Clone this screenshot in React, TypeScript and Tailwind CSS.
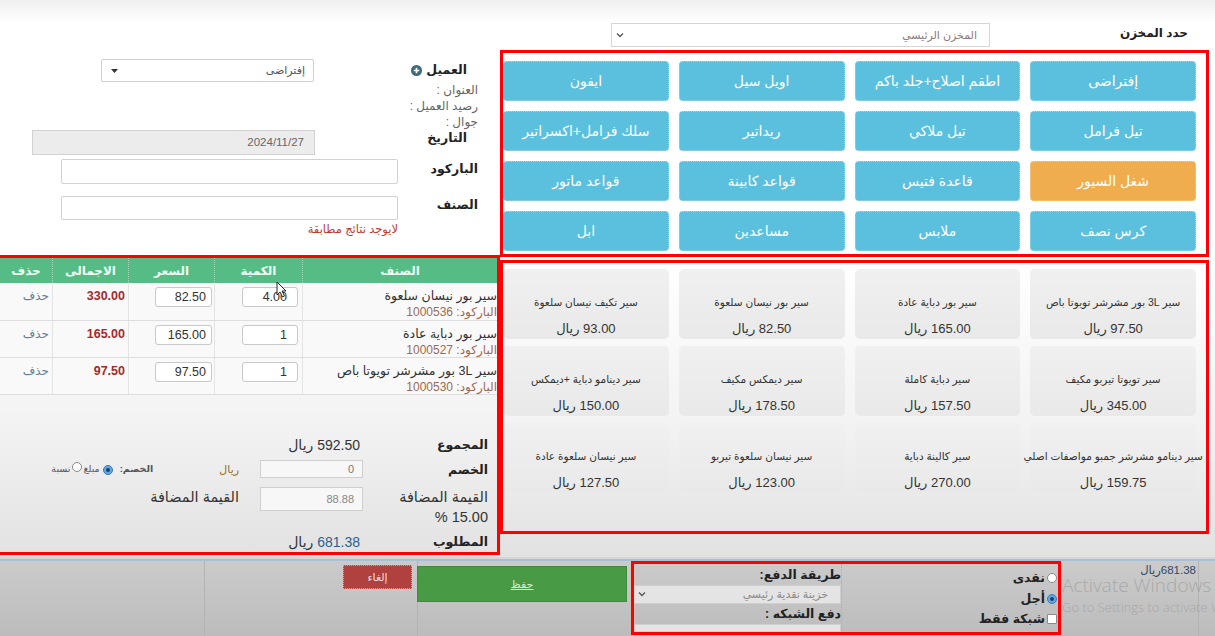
import React from "react";

const cats: { t: string; o?: boolean }[] = [
  { t: "إفتراضى" },
  { t: "اطقم اصلاح+جلد باكم" },
  { t: "اويل سيل" },
  { t: "ايفون" },
  { t: "تيل فرامل" },
  { t: "تيل ملاكي" },
  { t: "ريداتير" },
  { t: "سلك فرامل+اكسراتير" },
  { t: "شغل السيور", o: true },
  { t: "قاعدة فتيس" },
  { t: "قواعد كابينة" },
  { t: "قواعد ماتور" },
  { t: "كرس نصف" },
  { t: "ملابس" },
  { t: "مساعدين" },
  { t: "ابل" },
];

const products: [string, string][] = [
  ["سير 3L بور مشرشر تويوتا باص", "97.50"],
  ["سير بور دباية عادة", "165.00"],
  ["سير بور نيسان سلعوة", "82.50"],
  ["سير تكيف نيسان سلعوة", "93.00"],
  ["سير تويوتا تيربو مكيف", "345.00"],
  ["سير دباية كاملة", "157.50"],
  ["سير ديمكس مكيف", "178.50"],
  ["سير دينامو دباية +ديمكس", "150.00"],
  ["سير دينامو مشرشر جمبو مواصفات اصلي", "159.75"],
  ["سير كالينة دباية", "270.00"],
  ["سير نيسان سلعوة تيربو", "123.00"],
  ["سير نيسان سلعوة عادة", "127.50"],
];

const cart: [string, string, string, string, string][] = [
  ["سير بور نيسان سلعوة", "1000536", "4.00", "82.50", "330.00"],
  ["سير بور دباية عادة", "1000527", "1", "165.00", "165.00"],
  ["سير 3L بور مشرشر تويوتا باص", "1000530", "1", "97.50", "97.50"],
];

function Chevron() {
  return (
    <svg width="8" height="6" viewBox="0 0 8 6">
      <path d="M1 1.5l3 3 3-3" fill="none" stroke="#555" strokeWidth="1.3" />
    </svg>
  );
}

function Radio({ checked }: { checked?: boolean }) {
  return checked ? (
    <span className="inline-flex w-[10px] h-[10px] rounded-full bg-[#5ea9e6] border border-[#3b78b6] items-center justify-center shrink-0">
      <span className="w-[4px] h-[4px] rounded-full bg-[#1f3f63]" />
    </span>
  ) : (
    <span className="inline-block w-[10px] h-[10px] rounded-full bg-white border border-[#8a8a8a] shrink-0" />
  );
}

function RightColumn() {
  return (
    <div className="w-[715px] shrink-0 flex flex-col">
      {/* warehouse row */}
      <div className="h-[50px] flex items-start pt-[23px] pr-[27px]">
        <div className="w-[198px] h-[20px] leading-[20px] text-[12px] font-bold text-[#222]">حدد المخزن</div>
        <div className="w-[379px] h-[24px] border border-[#d6d6d6] bg-white flex items-center justify-between pr-[12px] pl-[4px]">
          <span className="text-[11px] text-[#8a7a7a]">المخزن الرئيسي</span>
          <Chevron />
        </div>
      </div>
      {/* categories */}
      <div className="mr-[6px] w-[709px] h-[207px] border-[3px] border-[#ff0000] pt-[8px] pr-[10px]">
        <div className="grid grid-cols-4 gap-[10px]">
          {cats.map((c, i) => (
            <div
              key={i}
              className={`h-[40px] rounded-[4px] flex items-center justify-center text-white text-[14px] border border-dotted border-white/40 ${
                c.o ? "bg-[#f0ad4e]" : "bg-[#5bc0de]"
              }`}
            >
              {c.t}
            </div>
          ))}
        </div>
      </div>
      {/* products */}
      <div className="mr-[6px] mt-[3px] w-[709px] h-[274px] border-[3px] border-[#ff0000] pt-[6px] pr-[10px]">
        <div className="grid grid-cols-4 gap-x-[10px] gap-y-[7px]">
          {products.map(([n, p], i) => (
            <div
              key={i}
              className="h-[70px] rounded-[5px] bg-[linear-gradient(to_bottom,#f0f0f0,#e9e9e9)] flex flex-col items-center pt-[26px]"
            >
              <div className="text-[10.5px] leading-[14px] text-[#333] whitespace-nowrap">{n}</div>
              <div className="mt-[12px] text-[13px] leading-[16px] text-[#333] whitespace-nowrap">
                {p} ريال
              </div>
            </div>
          ))}
        </div>
      </div>
    </div>
  );
}

function LeftColumn() {
  return (
    <div className="w-[500px] shrink-0 flex flex-col pt-[59px]">
      {/* customer */}
      <div className="flex items-center h-[23px] pr-[33px]">
        <div className="w-[153px] flex items-center gap-[4px] text-[12.5px] font-bold text-[#222]">
          <span>العميل</span>
          <svg width="11" height="11" viewBox="0 0 12 12">
            <circle cx="6" cy="6" r="6" fill="#3a6a7c" />
            <path d="M6 3v6M3 6h6" stroke="#fff" strokeWidth="1.8" />
          </svg>
        </div>
        <div className="w-[213px] h-[23px] border border-[#cfcfcf] bg-white rounded-[2px] flex items-center justify-between pr-[8px] pl-[9px]">
          <span className="text-[11px] text-[#555]">إفتراضى</span>
          <svg width="7" height="4" viewBox="0 0 7 4">
            <path d="M0 0h7L3.5 4z" fill="#333" />
          </svg>
        </div>
      </div>
      <div className="pr-[22px] text-[12px] leading-[16px] text-[#666]">
        <div>العنوان :</div>
        <div>رصيد العميل :</div>
        <div>جوال :</div>
      </div>
      {/* date */}
      <div className="flex items-start pr-[33px] h-[25px]">
        <div className="w-[152px] leading-[16px] text-[12.5px] font-bold text-[#222]">التاريخ</div>
        <div className="w-[283px] h-[25px] bg-[#ececec] border border-[#d2d2d2] flex items-center pr-[10px] text-[11.5px] text-[#666]">
          2024/11/27
        </div>
      </div>
      {/* barcode */}
      <div className="mt-[4px] flex items-start pr-[22px]">
        <div className="w-[80px] pt-[2px] leading-[16px] text-[12.5px] font-bold text-[#222]">الباركود</div>
        <div className="w-[337px] h-[25px] bg-white border border-[#d2d2d2] rounded-[2px]" />
      </div>
      <div className="mt-[12px] flex items-start pr-[22px]">
        <div className="w-[80px] pt-[1px] leading-[16px] text-[12.5px] font-bold text-[#222]">الصنف</div>
        <div className="w-[337px] h-[24px] bg-white border border-[#d2d2d2] rounded-[2px]" />
      </div>
      <div className="mt-[2px] pr-[102px] text-[11.5px] leading-[14px] text-[#c0392b]">لايوجد نتائج مطابقة</div>

      {/* cart box */}
      <div className="mt-[19px] w-[500px] h-[300px] border-t-[3px] border-r-[3px] border-b-[3px] border-[#ff0000] flex flex-col">
        <div className="flex h-[25px] bg-[#55bc86] text-[#f0fff5] text-[12px] font-bold">
          <div className="w-[195px] flex items-center justify-center border-l border-dotted border-[#9bd9b7]">الصنف</div>
          <div className="w-[88px] flex items-center justify-center border-l border-dotted border-[#9bd9b7]">الكمية</div>
          <div className="w-[86px] flex items-center justify-center border-l border-dotted border-[#9bd9b7]">السعر</div>
          <div className="w-[76px] flex items-center justify-center border-l border-dotted border-[#9bd9b7]">الاجمالى</div>
          <div className="w-[52px] flex items-center justify-center">حذف</div>
        </div>
        {cart.map(([n, b, q, p, t], i) => (
          <div key={i} className={`flex ${i === 0 ? "h-[38px]" : "h-[37px]"} bg-[#f9f9f9] border-b border-[#dedede]`}>
            <div className="w-[195px] border-l border-[#e4e4e4] pt-[5px]">
              <div className="text-[12.5px] leading-[16px] text-[#333] whitespace-nowrap">{n}</div>
              <div className="text-[12px] leading-[16px] text-[#9c6a55] whitespace-nowrap">الباركود: {b}</div>
            </div>
            <div className="w-[88px] border-l border-[#e4e4e4] pt-[4px] pr-[4px]">
              <div className="w-[56px] h-[20px] bg-white border border-[#c8c8c8] rounded-[3px] flex items-center pr-[10px] text-[12.5px] text-[#333]">
                {q}
              </div>
            </div>
            <div className="w-[86px] border-l border-[#e4e4e4] pt-[4px] pr-[2px]">
              <div className="w-[57px] h-[20px] bg-white border border-[#c8c8c8] rounded-[3px] flex items-center pr-[5px] text-[12.5px] text-[#333]">
                {p}
              </div>
            </div>
            <div className="w-[76px] border-l border-[#e4e4e4] pt-[5px] pr-[3px] text-[12.5px] font-bold leading-[16px] text-[#a52a2a]">
              {t}
            </div>
            <div className="w-[52px] pt-[5px] pr-[3px] text-[12px] leading-[16px] text-[#5f7f99]">حذف</div>
          </div>
        ))}
        {/* summary */}
        <div className="pr-[9px] flex flex-col">
          <div className="mt-[40px] flex items-center h-[20px]">
            <div className="w-[128px] text-[12.5px] font-bold text-[#222]">المجموع</div>
            <div className="text-[14px] text-[#333]">592.50 ريال</div>
          </div>
          <div className="mt-[5px] flex items-center h-[18px]">
            <div className="w-[125px] text-[12.5px] font-bold text-[#222] pt-[3px]">الخصم</div>
            <div className="w-[103px] h-[18px] bg-[#f7f7f7] border border-[#cfcfcf] flex items-center pr-[8px] text-[11px] text-[#777]">0</div>
            <div className="mr-[21px] text-[11px] text-[#9a6a2a]">ريال</div>
            <div className="mr-[66px] flex items-center text-[9.5px] text-[#555]">
              <span className="font-bold">الخصم:</span>
              <span className="mr-[7px]"><Radio checked /></span>
              <span className="mr-[3px]">مبلغ</span>
              <span className="mr-[1px]"><Radio /></span>
              <span className="mr-[2px]">نسبة</span>
            </div>
          </div>
          <div className="mt-[9px] flex items-start h-[40px]">
            <div className="w-[125px] text-[14.5px] leading-[20px] text-[#333]">
              <div>القيمة المضافة</div>
              <div>15.00 %</div>
            </div>
            <div className="w-[103px] h-[24px] bg-[#f7f7f7] border border-[#cfcfcf] flex items-center pr-[8px] text-[11px] text-[#888]">88.88</div>
            <div className="mr-[21px] text-[14.5px] leading-[20px] text-[#333]">القيمة المضافة</div>
          </div>
          <div className="mt-[5px] flex items-center h-[20px]">
            <div className="w-[128px] text-[12.5px] font-bold text-[#222]">المطلوب</div>
            <div className="text-[14px] text-[#333]">
              <span className="text-[#2f5f8f]">681.38</span> ريال
            </div>
          </div>
        </div>
      </div>
    </div>
  );
}

function BottomBar() {
  return (
    <div className="flex flex-col">
      <div className="h-[2px] bg-[#d6d6d6]" />
      <div className="h-[2px] bg-[#a9bfd4]" />
      <div className="flex h-[75px] bg-[linear-gradient(to_bottom,#cbcbcb,#bcbcbc)]">
        <div className="w-[17px] border-l border-[#b3b3b3]" />
        <div className="w-[137px] pr-[2px] pt-[2px] text-[11.5px] leading-[14px] text-[#2d4a6b]">681.38ريال</div>
        <div className="w-[430px] h-[74px] border-[3px] border-[#ff0000] flex">
          <div className="w-[217px] pr-[1px] flex flex-col text-[12.5px] font-bold text-[#222] border-l border-dotted border-[#ababab]">
            <div className="mt-[5px] h-[18px] flex items-center gap-[2px]">
              <Radio />
              <span>نقدى</span>
            </div>
            <div className="mt-[3px] h-[18px] flex items-center gap-[2px]">
              <Radio checked />
              <span>أجل</span>
            </div>
            <div className="mt-[2px] h-[18px] flex items-center gap-[2px]">
              <span className="inline-block w-[10px] h-[10px] bg-white border border-[#8a8a8a] rounded-[1px]" />
              <span>شبكة فقط</span>
            </div>
          </div>
          <div className="w-[207px] flex flex-col overflow-hidden">
            <div className="h-[19px] mt-[2px] leading-[19px] text-[12.5px] font-bold text-[#222]">طريقة الدفع:</div>
            <div className="h-[25px] ml-[-1px] bg-[#e4e4e4] border border-[#cfcfcf] flex items-center justify-between pr-[12px] pl-[4px]">
              <span className="text-[11px] text-[#8a8a8a]">خزينة نقدية رئيسي</span>
              <Chevron />
            </div>
            <div className="h-[20px] leading-[20px] text-[12.5px] font-bold text-[#222]">دفع الشبكه :</div>
            <div className="h-[20px] bg-[#e4e4e4] border border-[#cfcfcf]" />
          </div>
        </div>
        <div className="w-[214px] pr-[4px] pt-[5px] border-l border-[#b3b3b3]">
          <div className="w-[210px] h-[36px] bg-[#489a45] border border-[#3f8a3c] flex items-center justify-center text-[11px] text-[#d9ecd6] underline">
            حفظ
          </div>
        </div>
        <div className="w-[213px] pr-[5px] pt-[4px] border-l border-[#b3b3b3]">
          <div className="w-[69px] h-[24px] bg-[#b0413f] border border-dotted border-[#d89a99] flex items-center justify-center text-[11px] text-[#f3dede]">
            إلغاء
          </div>
        </div>
        <div className="flex-1" />
      </div>
    </div>
  );
}

export default function App() {
  return (
    <div
      dir="rtl"
      className="relative w-[1215px] h-[636px] overflow-hidden bg-[#f4f4f4] font-['Liberation_Sans','DejaVu_Sans',sans-serif] text-[#333]"
    >
      <div className="flex h-[557px] bg-[linear-gradient(to_bottom,#efefef_0px,#ffffff_22px,#ffffff_260px,#f3f3f3_420px,#e2e2e2_557px)]">
        <RightColumn />
        <LeftColumn />
      </div>
      <BottomBar />

      {/* mouse cursor */}
      <svg className="absolute left-[276px] top-[281px]" width="11" height="17" viewBox="0 0 11 17">
        <path d="M1 1v13l3-3 2.5 5 2-1-2.5-5H10z" fill="#fff" stroke="#222" strokeWidth="1" />
      </svg>

      {/* windows watermark */}
      <div dir="ltr" className="absolute left-[1062px] top-[574px] whitespace-nowrap font-['Open_Sans',sans-serif] font-light text-[#9a9a9a]/70 pointer-events-none">
        <div className="text-[19px] leading-[22px]">Activate Windows</div>
        <div className="text-[13px] leading-[18px] mt-[2px]">Go to Settings to activate Windows.</div>
      </div>
    </div>
  );
}
